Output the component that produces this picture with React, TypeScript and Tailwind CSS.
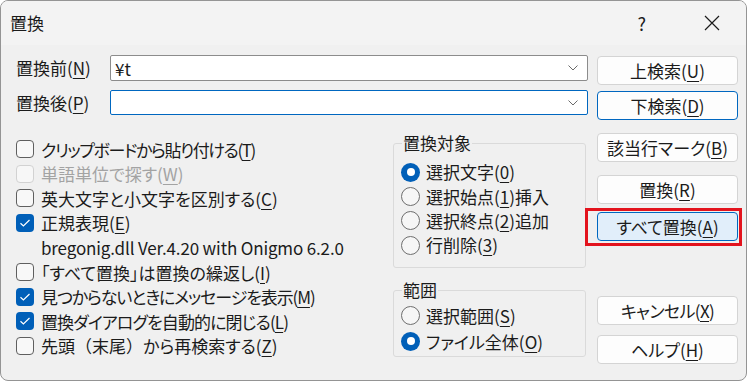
import React from "react";

const U = ({ children }: { children: React.ReactNode }) => (
  <span className="underline decoration-[1px] underline-offset-[3px]">{children}</span>
);

function Check({
  label,
  checked,
  disabled,
  track = "",
}: {
  label: React.ReactNode;
  checked?: boolean;
  disabled?: boolean;
  track?: string;
}) {
  return (
    <div className={`flex h-[24.6px] items-center gap-[7px] ${disabled ? "text-[#a3a3a3]" : ""}`}>
      {checked ? (
        <span className="flex h-[18px] w-[18px] items-center justify-center rounded-[4px] bg-[#005fb8]">
          <svg width="12" height="10" viewBox="0 0 12 10">
            <path d="M1.5 5.2 L4.4 8 L10.5 2" fill="none" stroke="#fff" strokeWidth="1.2" />
          </svg>
        </span>
      ) : (
        <span
          className={`h-[18px] w-[18px] rounded-[4px] border ${
            disabled ? "border-[#d2d2d2] bg-[#f7f7f7]" : "border-[#5f5f5f] bg-[#f8f8f8]"
          }`}
        />
      )}
      <span className={track}>{label}</span>
    </div>
  );
}

function Radio({ label, checked, h = "h-[24.3px]" }: { label: React.ReactNode; checked?: boolean; h?: string }) {
  return (
    <div className={`flex items-center gap-[6px] ${h}`}>
      {checked ? (
        <span className="flex h-[19px] w-[19px] items-center justify-center rounded-full bg-[#005fb8]">
          <span className="h-[8px] w-[8px] rounded-full bg-white" />
        </span>
      ) : (
        <span className="h-[19px] w-[19px] rounded-full border border-[#6e6e6e] bg-[#f6f6f6]" />
      )}
      <span>{label}</span>
    </div>
  );
}

function Btn({
  children,
  primary,
  active,
  className = "",
}: {
  children: React.ReactNode;
  primary?: boolean;
  active?: boolean;
  className?: string;
}) {
  return (
    <button
      className={`flex h-[29px] w-[141px] items-center justify-center rounded-[4px] border ${
        active
          ? "border-[#0067c0] bg-[#e1eefa]"
          : primary
          ? "border-[#0067c0] bg-[#fdfdfd]"
          : "border-[#d4d4d4] bg-[#fdfdfd]"
      } ${className}`}
    >
      {children}
    </button>
  );
}

function Combo({ value, focused }: { value?: string; focused?: boolean }) {
  return (
    <div
      className={`flex w-[478px] items-center justify-between rounded-[2px] border bg-white pl-[4px] pr-[9px] ${
        focused ? "h-[25px] border-[#0067c0]" : "h-[26px] border-[#8c8c8c]"
      }`}
    >
      <span className="leading-none">{value}</span>
      <svg width="10" height="6" viewBox="0 0 10 6">
        <path d="M0.5 0.5 L5 5 L9.5 0.5" fill="none" stroke="#6a6a6a" strokeWidth="1" />
      </svg>
    </div>
  );
}

export default function App() {
  return (
    <div className="h-[382px] w-[749px] bg-white font-['Noto_Sans_CJK_JP',sans-serif] text-[17px] text-[#1b1b1b] [font-feature-settings:'palt']">
      <div className="h-[381px] w-[747px] overflow-hidden rounded-[8px] border border-[#949494] bg-[#f0f0f0]">
        {/* title bar */}
        <div className="flex h-[44px] items-center bg-[#f3f3f3] pl-[9px]">
          <span className="flex-1">置換</span>
          <span className="mr-[58px] text-[18px]">?</span>
          <svg className="mr-[26px]" width="16" height="16" viewBox="0 0 16 16">
            <path d="M1 1 L15 15 M15 1 L1 15" stroke="#1b1b1b" strokeWidth="1.2" />
          </svg>
        </div>

        <div className="pl-[15px] pt-[10px]">
          <div className="flex h-[35px] items-start">
            <div className="flex h-[26px] w-[94px] items-center">
              置換前(<U>N</U>)
            </div>
            <Combo value="¥t" />
            <Btn className="ml-[9px] mt-[1px]">
              上検索(<U>U</U>)
            </Btn>
          </div>
          <div className="flex h-[35px] items-start">
            <div className="flex h-[25px] w-[94px] items-center">
              置換後(<U>P</U>)
            </div>
            <Combo focused />
            <Btn primary className="ml-[9px] mt-[1px]">
              下検索(<U>D</U>)
            </Btn>
          </div>
        </div>

        <div className="flex pl-[15px]">
          <div className="w-[377px] pt-[12px]">
            <Check track="tracking-[-1.4px]" label={<>クリップボードから貼り付ける(<U>T</U>)</>} />
            <Check disabled label={<>単語単位で探す(<U>W</U>)</>} />
            <Check label={<>英大文字と小文字を区別する(<U>C</U>)</>} />
            <Check checked label={<>正規表現(<U>E</U>)</>} />
            <div className="flex h-[24.6px] items-center pl-[25px] tracking-[-0.15px]">
              bregonig.dll Ver.4.20 with Onigmo 6.2.0
            </div>
            <Check label={<>「すべて置換」は置換の繰返し(<U>I</U>)</>} />
            <Check checked track="tracking-[-1.1px]" label={<>見つからないときにメッセージを表示(<U>M</U>)</>} />
            <Check checked track="tracking-[-0.9px]" label={<>置換ダイアログを自動的に閉じる(<U>L</U>)</>} />
            <Check
              label={
                <>
                  先頭<span className="[font-feature-settings:normal]">（</span>末尾
                  <span className="[font-feature-settings:normal]">）</span>から再検索する(<U>Z</U>)
                </>
              }
            />
          </div>

          <div className="w-[193px] pt-[6px]">
            <fieldset className="rounded-[3px] border border-[#dadada] pb-[10px]">
              <legend className="ml-[8px] px-[1px] leading-[24px]">置換対象</legend>
              <div className="pl-[7px] pt-[5px]">
                <Radio checked label={<>選択文字(<U>0</U>)</>} />
                <Radio label={<>選択始点(<U>1</U>)挿入</>} />
                <Radio label={<>選択終点(<U>2</U>)追加</>} />
                <Radio label={<>行削除(<U>3</U>)</>} />
              </div>
            </fieldset>
            <fieldset className="mt-[10px] rounded-[3px] border border-[#dadada] pb-[2px]">
              <legend className="ml-[8px] px-[1px] leading-[24px]">範囲</legend>
              <div className="pl-[7px] pt-[1px]">
                <Radio h="h-[25.5px]" label={<>選択範囲(<U>S</U>)</>} />
                <Radio h="h-[25.5px]" checked label={<>ファイル全体(<U>O</U>)</>} />
              </div>
            </fieldset>
          </div>

          <div className="ml-[11px] flex w-[141px] flex-col pt-[8px]">
            <Btn>
              該当行マーク(<U>B</U>)
            </Btn>
            <Btn className="mt-[13px]">
              置換(<U>R</U>)
            </Btn>
            <div className="relative mt-[8px]">
              <Btn active className="h-[28px]">
                すべて置換(<U>A</U>)
              </Btn>
              <div className="absolute -bottom-[5px] -left-[12px] -right-[4px] -top-[4px] border-[3px] border-[#e3131d]" />
            </div>
            <Btn className="mt-[55px] tracking-[-0.6px]">
              キャンセル(<U>X</U>)
            </Btn>
            <Btn className="mt-[10px]">
              ヘルプ(<U>H</U>)
            </Btn>
          </div>
        </div>
      </div>
    </div>
  );
}
